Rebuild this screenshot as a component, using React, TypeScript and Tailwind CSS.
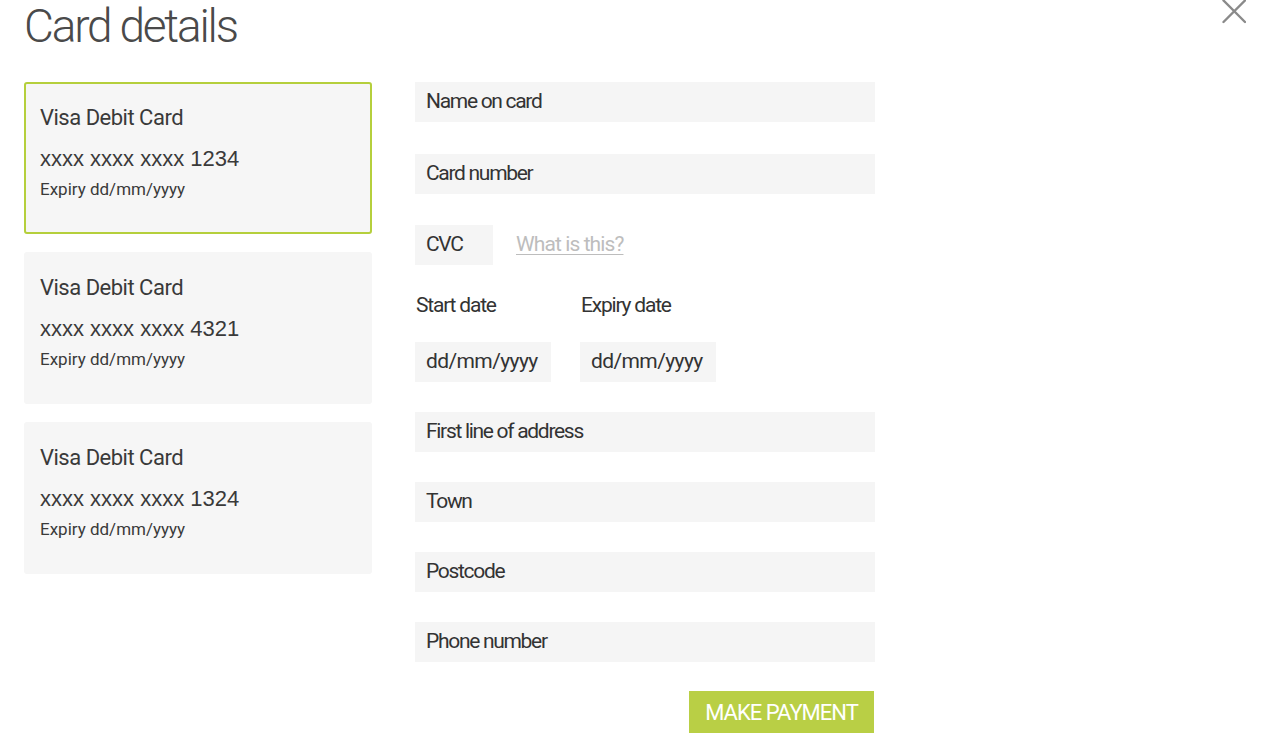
const cards = [
  { id: 1, last: "1234", selected: true },
  { id: 2, last: "4321", selected: false },
  { id: 3, last: "1324", selected: false },
];

const roboto = "font-['Roboto',sans-serif]";
const arial = "font-['Liberation_Sans',Arial,sans-serif]";

function Field({ label, className = "", date = false }: { label: string; className?: string; date?: boolean }) {
  return (
    <div
      className={`h-10 bg-[#f5f5f5] flex items-center px-[11px] text-[21px] text-[#333] ${
        date ? "tracking-[-0.6px]" : "tracking-[-1.3px]"
      } ${className}`}
    >
      {label}
    </div>
  );
}

export default function App() {
  return (
    <div className={`relative w-[1280px] h-[733px] bg-white overflow-hidden ${roboto}`}>
      {/* close */}
      <button className="absolute left-[1222px] top-0 w-6 h-6">
        <svg viewBox="0 0 24 24" width="24" height="24" stroke="#8a8a8a" strokeWidth="2.4" strokeLinecap="round">
          <line x1="1.5" y1="0.5" x2="23" y2="22" />
          <line x1="23" y1="0.5" x2="1.5" y2="22" />
        </svg>
      </button>

      <div className="pl-6">
        <h1 className="pt-[2px] text-[46px] leading-[48px] font-light tracking-[-2.2px] text-[#4a4a4a]">Card details</h1>

        <div className="flex mt-8 gap-[43px]">
          {/* saved cards */}
          <div className="flex flex-col gap-[18px] w-[348px]">
            {cards.map((c) => (
              <div
                key={c.id}
                className={`h-[152px] rounded-[3px] bg-[#f6f6f6] px-[14px] pt-5 text-[#3a3a3a] border-2 ${
                  c.selected ? "border-[#b5cf3c]" : "border-transparent"
                }`}
              >
                <div className="text-[22px] leading-7 tracking-[-0.5px]">Visa Debit Card</div>
                <div className={`mt-[15px] text-[22px] leading-6 ${arial}`}>xxxx xxxx xxxx {c.last}</div>
                <div className="mt-2 text-[17px] leading-5">Expiry dd/mm/yyyy</div>
              </div>
            ))}
          </div>

          {/* form */}
          <div className="flex flex-col w-[460px]">
            <Field label="Name on card" />
            <Field label="Card number" className="mt-8" />
            <div className="flex items-center mt-[31px]">
              <Field label="CVC" className="w-[78px]" />
              <a className="ml-[23px] text-[21px] tracking-[-0.9px] text-[#bdbdbd] underline underline-offset-[3px] decoration-1">
                What is this?
              </a>
            </div>
            <div className="flex mt-[28px] gap-[29px]">
              <div className="flex flex-col w-[136px]">
                <span className="text-[21px] tracking-[-1.2px] text-[#333] leading-6 pl-px">Start date</span>
                <Field label="dd/mm/yyyy" date className="mt-[25px]" />
              </div>
              <div className="flex flex-col w-[136px]">
                <span className="text-[21px] tracking-[-1.2px] text-[#333] leading-6 pl-px">Expiry date</span>
                <Field label="dd/mm/yyyy" date className="mt-[25px]" />
              </div>
            </div>
            <Field label="First line of address" className="mt-[30px]" />
            <Field label="Town" className="mt-[30px]" />
            <Field label="Postcode" className="mt-[30px]" />
            <Field label="Phone number" className="mt-[30px]" />
            <div className="flex justify-end mt-[29px]">
              <button className="h-[42px] w-[185px] mr-px bg-[#b9cf45] text-white text-[22px] tracking-[-1px]">
                MAKE PAYMENT
              </button>
            </div>
          </div>
        </div>
      </div>
    </div>
  );
}
